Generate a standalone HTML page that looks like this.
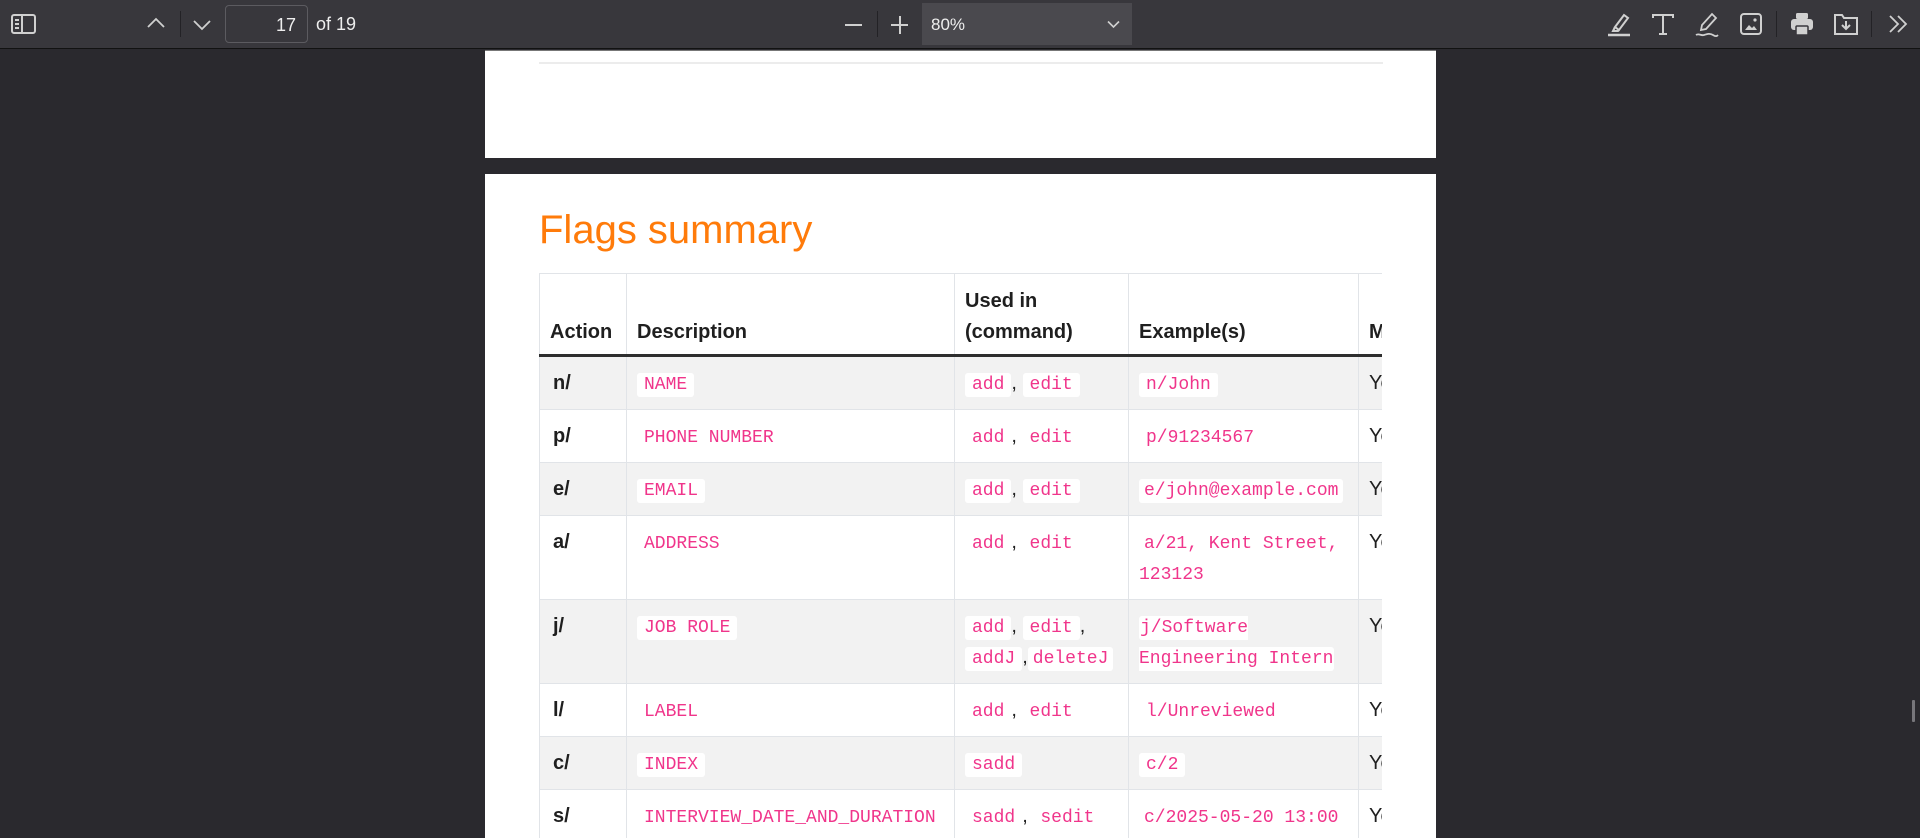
<!DOCTYPE html>
<html><head><meta charset="utf-8">
<style>
*{margin:0;padding:0;box-sizing:border-box}
html,body{width:1920px;height:838px;overflow:hidden;background:#2a292e;font-family:"Liberation Sans",sans-serif}
.tb{position:absolute;left:0;top:0;width:1920px;height:49px;background:#38373c;border-bottom:1px solid #121212}
.ab{position:absolute}
.sep{position:absolute;top:11px;width:1px;height:26px;background:#232226}
.pg{position:absolute;left:485px;width:951px;background:#fff}
.code{font-family:"Liberation Mono",monospace;font-size:18px;line-height:20px;color:#f0358b;background:#fff;padding:2px 7px;border-radius:3px}
table{border-collapse:collapse;table-layout:fixed;width:1000px;font-size:20px;color:#1f1f1f}
td,th{border:1px solid #e1e4e8;line-height:31px;padding:11px 10px 10px;vertical-align:top;text-align:left}
th{font-weight:bold;vertical-align:bottom;padding:12px 10px 6px;border-bottom:3px solid #2e2e2e}
td:first-child{font-weight:bold;padding-left:13px}
tr.g td{background:#f2f2f2}
</style></head><body>
<div class="tb">
 <svg class="ab" style="left:11px;top:14px" width="25" height="20" viewBox="0 0 25 20" fill="none" stroke="#d0d0d0" stroke-width="2"><rect x="1" y="1" width="23" height="18" rx="2"/><line x1="11" y1="1" x2="11" y2="19"/><line x1="4" y1="6" x2="8" y2="6"/><line x1="4" y1="10" x2="8" y2="10"/><line x1="4" y1="14" x2="8" y2="14"/></svg>
 <svg class="ab" style="left:147px;top:17px" width="18" height="12" viewBox="0 0 18 12" fill="none" stroke="#d0d0d0" stroke-width="1.8"><path d="M1 10L9 2L17 10"/></svg>
 <div class="sep" style="left:180px"></div>
 <svg class="ab" style="left:193px;top:19px" width="18" height="12" viewBox="0 0 18 12" fill="none" stroke="#d0d0d0" stroke-width="1.8"><path d="M1 2L9 10L17 2"/></svg>
 <div class="ab" style="left:225px;top:5px;width:83px;height:38px;border:1px solid #5c5b60;border-radius:4px;color:#eee;font-size:18px;text-align:right;padding:9px 11px 0 0">17</div>
 <div class="ab" style="left:316px;top:14px;color:#eee;font-size:18px">of 19</div>
 <div class="ab" style="left:845px;top:24px;width:17px;height:2px;background:#d0d0d0"></div>
 <div class="sep" style="left:877px"></div>
 <div class="ab" style="left:891px;top:24px;width:17px;height:2px;background:#d0d0d0"></div>
 <div class="ab" style="left:898.5px;top:16px;width:2px;height:18px;background:#d0d0d0"></div>
 <div class="ab" style="left:922px;top:3px;width:210px;height:42px;background:#4a494e;color:#eee;font-size:17px;padding:12px 0 0 9px">80%</div>
 <svg class="ab" style="left:1107px;top:20px" width="13" height="9" viewBox="0 0 13 9" fill="none" stroke="#d0d0d0" stroke-width="1.6"><path d="M1 1.5L6.5 7L12 1.5"/></svg>
 <svg class="ab" style="left:1606px;top:10px" width="26" height="28" viewBox="0 0 26 28" fill="none" stroke="#d0d0d0" stroke-width="2"><path d="M9 17L18 5l4 3-9 12z"/><path d="M9 17l-2 4h5l1-1"/><line x1="2" y1="25" x2="24" y2="25" stroke-width="2.5"/></svg>
 <svg class="ab" style="left:1651px;top:12px" width="24" height="24" viewBox="0 0 24 24" fill="none" stroke="#d0d0d0" stroke-width="2"><path d="M2 6V3h20v3M12 3v19M8 22h8"/></svg>
 <svg class="ab" style="left:1694px;top:10px" width="26" height="28" viewBox="0 0 26 28" fill="none" stroke="#d0d0d0" stroke-width="1.8"><path d="M7 20l1-5L18 4l4 4L12 19z"/><path d="M2 25c3-2 5 1 8 0s6-2 9 0 4 1 5 0"/></svg>
 <svg class="ab" style="left:1740px;top:13px" width="22" height="22" viewBox="0 0 22 22" fill="none" stroke="#d0d0d0" stroke-width="2"><rect x="1" y="1" width="20" height="20" rx="3"/><path d="M5 17l4-5 3 3 2-2 3 4z" fill="#d0d0d0" stroke="none"/><circle cx="15" cy="7" r="1.6" fill="#d0d0d0" stroke="none"/></svg>
 <div class="sep" style="left:1776px"></div>
 <svg class="ab" style="left:1790px;top:12px" width="24" height="24" viewBox="0 0 24 24"><rect x="6" y="1" width="12" height="6" rx="1.5" fill="#d0d0d0"/><rect x="1" y="7" width="22" height="11" rx="3" fill="#d0d0d0"/><rect x="6" y="14" width="12" height="9" rx="1" fill="#d0d0d0" stroke="#38373c" stroke-width="1.5"/></svg>
 <svg class="ab" style="left:1834px;top:12px" width="24" height="24" viewBox="0 0 24 24" fill="none" stroke="#d0d0d0" stroke-width="2"><path d="M1 3h7l2 3h13v16H1z"/><path d="M12 9v8M8 13l4 4 4-4"/></svg>
 <div class="sep" style="left:1871px"></div>
 <svg class="ab" style="left:1888px;top:15px" width="20" height="18" viewBox="0 0 20 18" fill="none" stroke="#d0d0d0" stroke-width="1.8"><path d="M2 1l8 8-8 8M10 1l8 8-8 8"/></svg>
</div>
<div class="pg" style="top:50px;height:108px;border-top:1px solid #777">
 <div class="ab" style="left:54px;top:11px;width:844px;height:2px;background:#ececec"></div>
</div>
<div class="pg" style="top:174px;height:664px;overflow:hidden">
 <div class="ab" style="left:54px;top:34px;font-size:40px;color:#ff7b0a">Flags summary</div>
 <div class="ab" style="left:54px;top:99px;width:843px;overflow:hidden;height:565px">
 <table>
 <colgroup><col style="width:87px"><col style="width:328px"><col style="width:174px"><col style="width:230px"><col style="width:181px"></colgroup>
 <tr><th>Action</th><th>Description</th><th>Used in (command)</th><th>Example(s)</th><th>Mandatory?</th></tr>
 <tr class="g"><td>n/</td><td><span class="code">NAME</span></td><td><span class="code">add</span>, <span class="code">edit</span></td><td><span class="code">n/John</span></td><td>Yes</td></tr>
 <tr><td>p/</td><td><span class="code">PHONE NUMBER</span></td><td><span class="code">add</span>, <span class="code">edit</span></td><td><span class="code">p/91234567</span></td><td>Yes</td></tr>
 <tr class="g"><td>e/</td><td><span class="code">EMAIL</span></td><td><span class="code">add</span>, <span class="code">edit</span></td><td><span class="code" style="padding:2px 5px">e/john@example.com</span></td><td>Yes</td></tr>
 <tr><td>a/</td><td><span class="code">ADDRESS</span></td><td><span class="code">add</span>, <span class="code">edit</span></td><td><span class="code" style="padding:2px 5px">a/21, Kent Street, 123123</span></td><td>Yes</td></tr>
 <tr class="g"><td>j/</td><td><span class="code">JOB ROLE</span></td><td><span class="code">add</span>, <span class="code">edit</span>, <span class="code">addJ</span>,<span class="code" style="padding:2px 5px">deleteJ</span></td><td><span class="code" style="padding:2px 1px">j/Software Engineering Intern</span></td><td>Yes</td></tr>
 <tr><td>l/</td><td><span class="code">LABEL</span></td><td><span class="code">add</span>, <span class="code">edit</span></td><td><span class="code">l/Unreviewed</span></td><td>Yes</td></tr>
 <tr class="g"><td>c/</td><td><span class="code">INDEX</span></td><td><span class="code">sadd</span></td><td><span class="code">c/2</span></td><td>Yes</td></tr>
 <tr><td>s/</td><td><span class="code">INTERVIEW_DATE_AND_DURATION</span></td><td><span class="code">sadd</span>, <span class="code">sedit</span></td><td><span class="code" style="padding:2px 5px">c/2025-05-20 13:00</span></td><td>Yes</td></tr>
 </table>
 </div>
</div>
<div class="ab" style="left:1912px;top:700px;width:3px;height:22px;background:#77767b;border-radius:1px"></div>
</body></html>
